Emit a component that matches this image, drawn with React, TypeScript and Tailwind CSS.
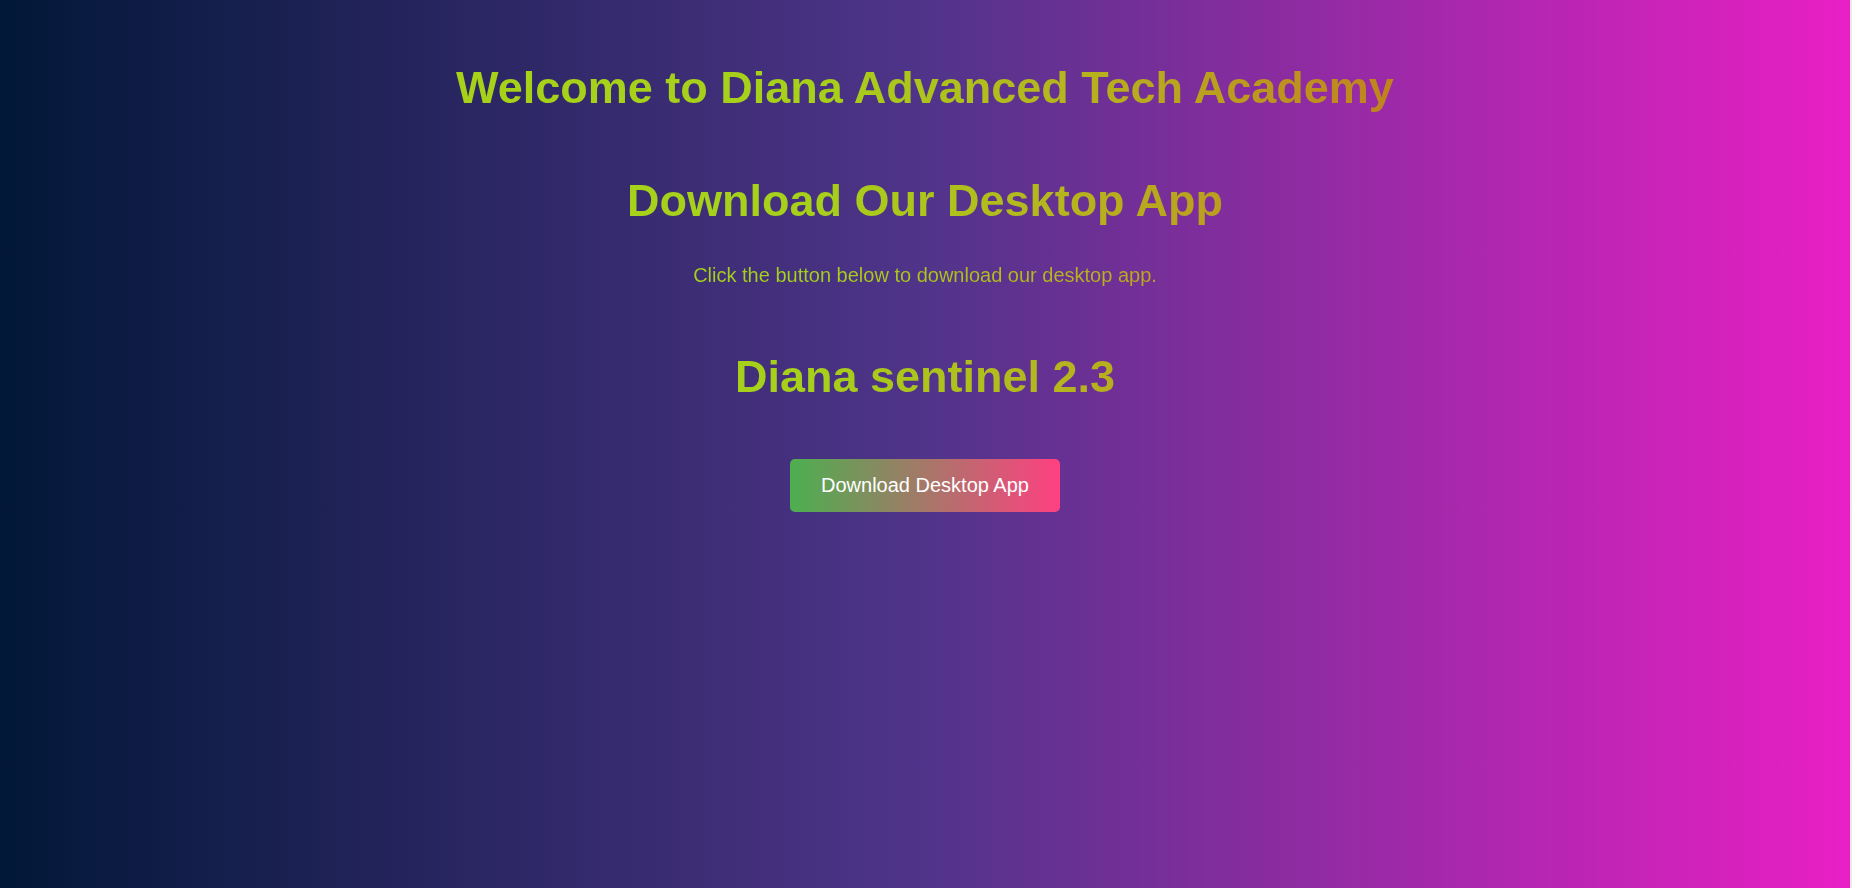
export default function App() {
  const textGradient =
    "bg-[linear-gradient(to_right,#a8d418_0%,#a6d01a_44%,#b6b41e_58%,#c0841e_75%,#cc5a1e_100%)] bg-clip-text text-transparent"

  return (
    <div className="min-h-screen bg-[#ececec] pr-[2px]">
      <div
        className="min-h-screen flex flex-col items-center bg-[linear-gradient(to_right,#021838_0%,#50348a_50%,#e91fc5_100%)] pt-[62px] text-center"
        style={{ fontFamily: '"Liberation Sans", Arial, sans-serif' }}
      >
        <h1 className={`w-full text-[45px] leading-[52px] font-bold ${textGradient}`}>
          Welcome to Diana Advanced Tech Academy
        </h1>

        {/* Download section */}
        <h2 className={`mt-[61px] w-full text-[45px] leading-[52px] font-bold ${textGradient}`}>
          Download Our Desktop App
        </h2>
        <p className={`mt-[37px] w-full text-[20px] leading-[23px] ${textGradient}`}>
          Click the button below to download our desktop app.
        </p>
        <h3 className={`mt-[64px] w-full text-[45px] leading-[52px] font-bold ${textGradient}`}>
          Diana sentinel 2.3
        </h3>

        <button className="mt-[56px] h-[53px] px-[31px] rounded-[5px] bg-[linear-gradient(to_right,#4caf50,#ff4081)] text-white text-[20px] leading-[23px]">
          Download Desktop App
        </button>
      </div>
    </div>
  )
}
